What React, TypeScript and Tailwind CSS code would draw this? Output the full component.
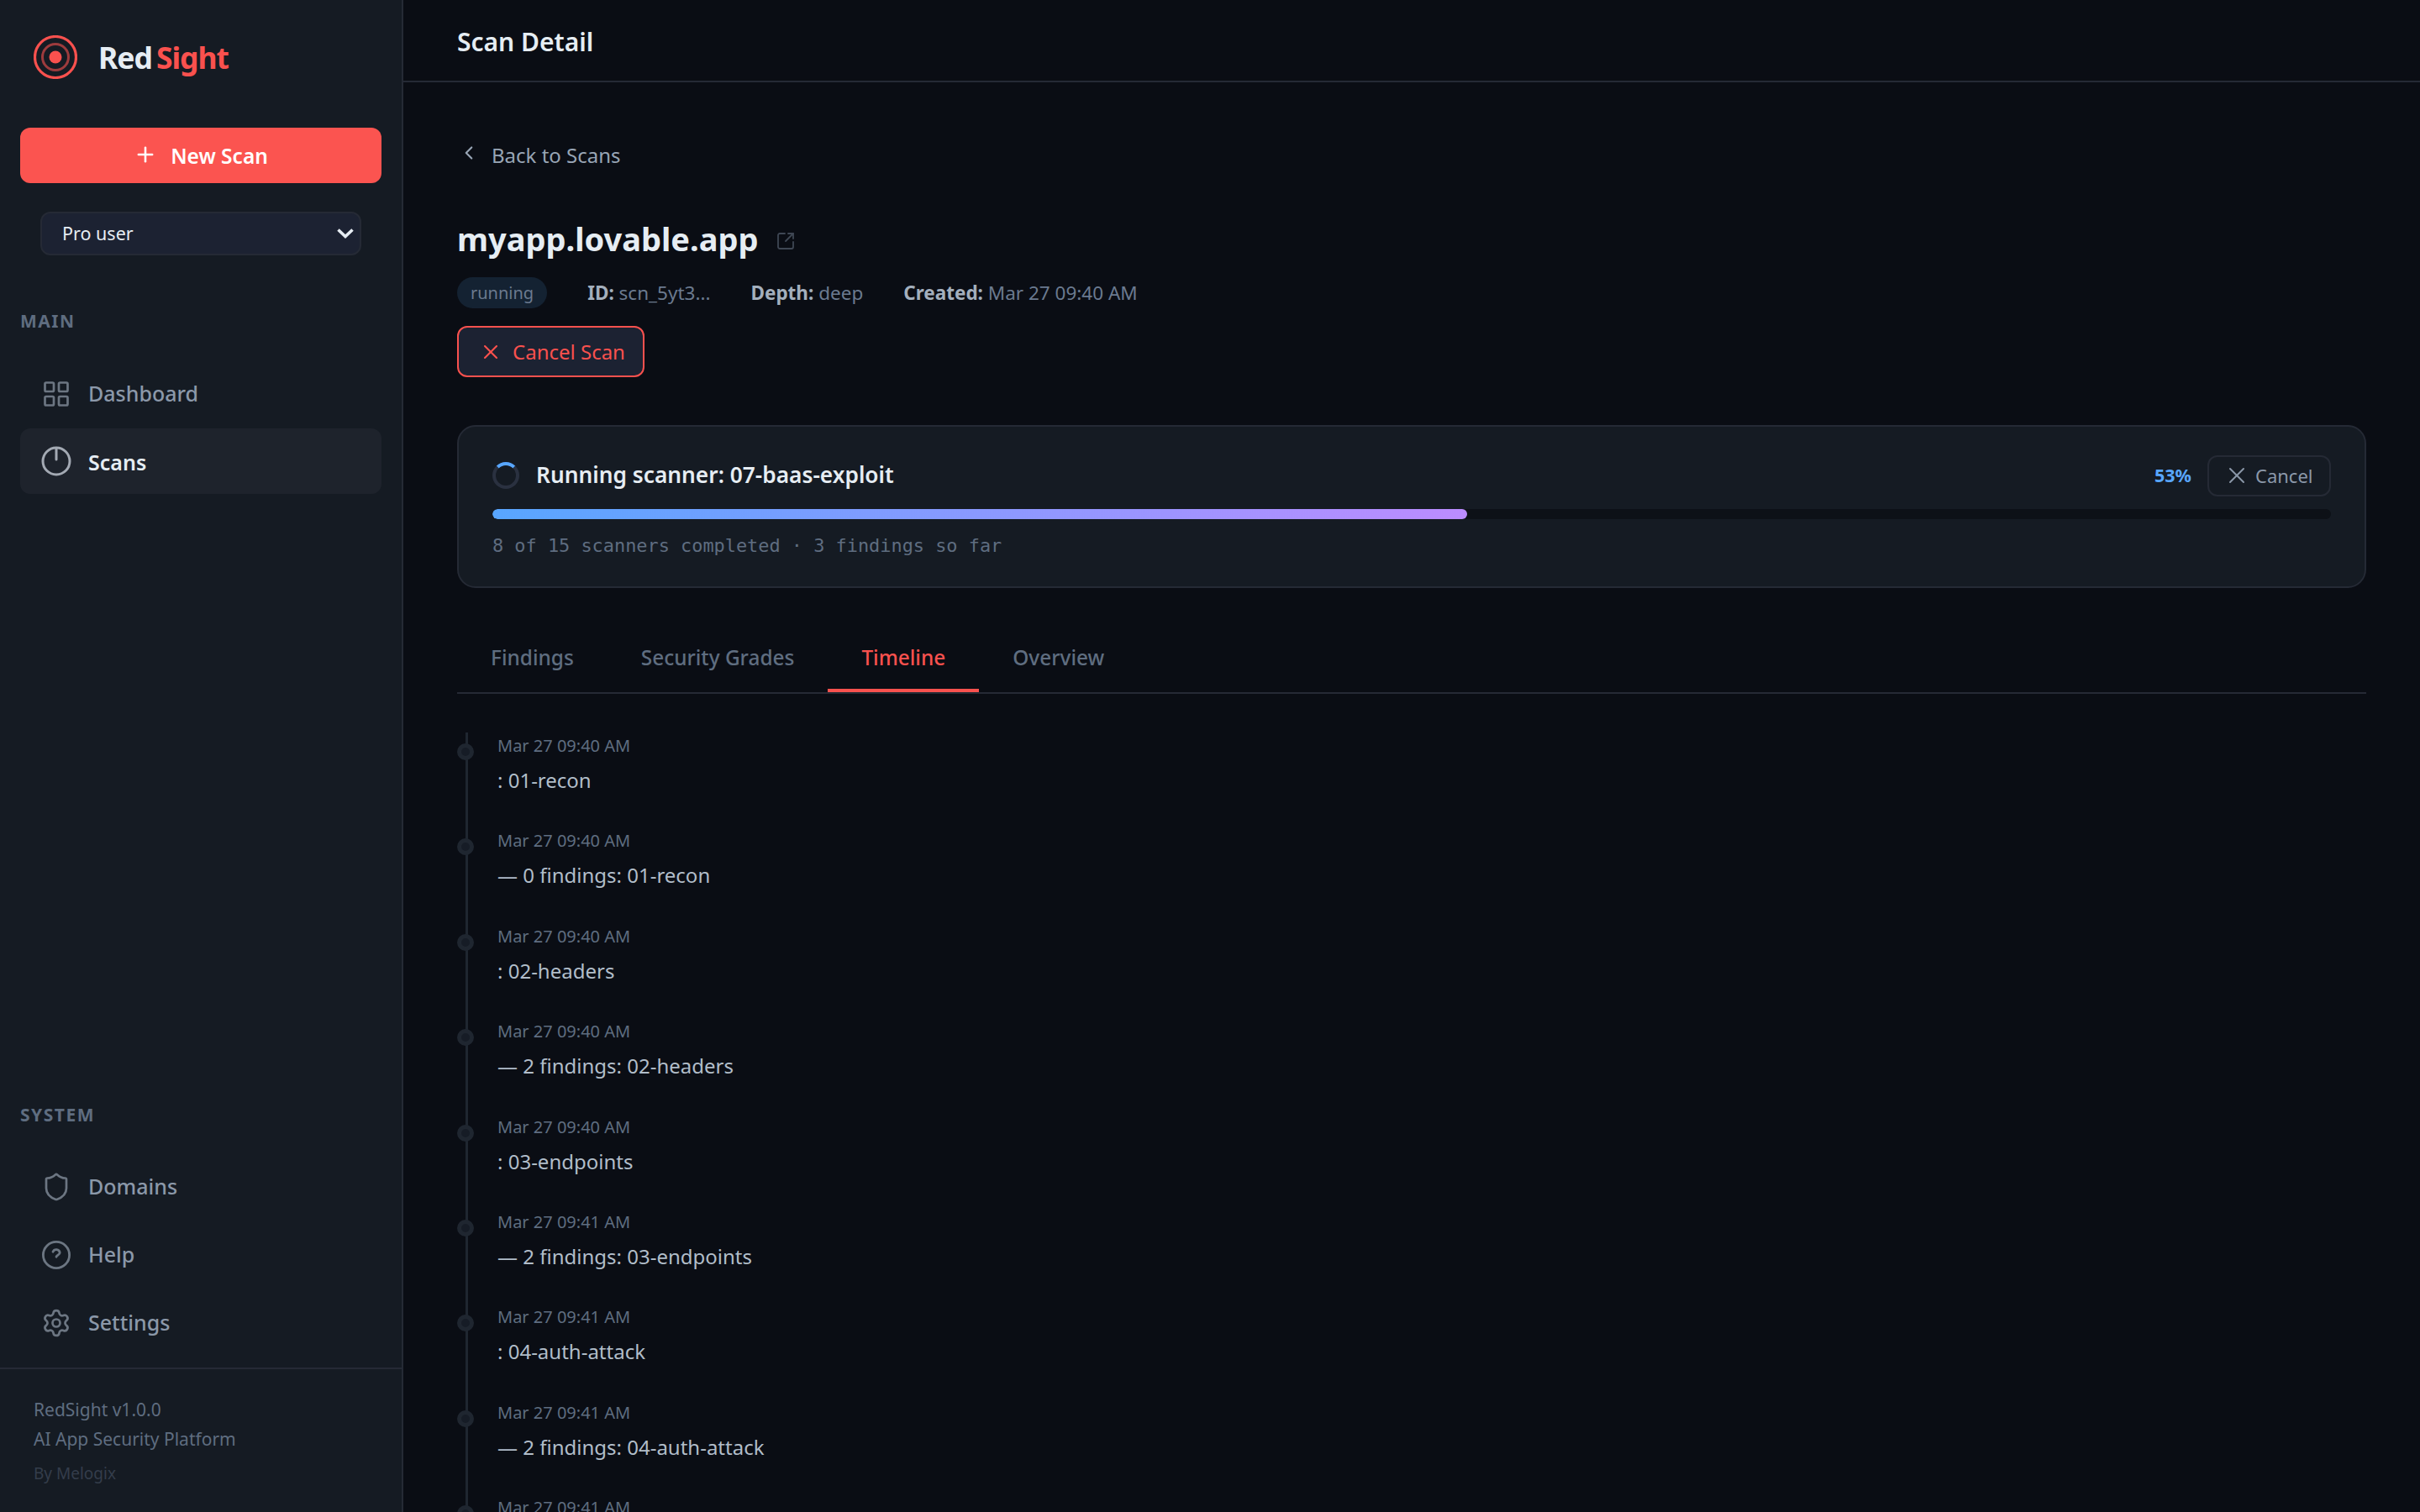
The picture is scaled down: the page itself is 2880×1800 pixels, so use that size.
import { ChevronLeft, LayoutGrid, Plus, Settings, Shield, SquareArrowOutUpRight, X } from "lucide-react";

const FONT = "font-['Noto_Sans','Open_Sans',sans-serif]";

function Logo() {
  return (
    <svg width="52" height="52" viewBox="0 0 52 52" fill="none" className="shrink-0">
      <circle cx="26" cy="26" r="24.5" stroke="#f9514e" strokeWidth="3.2" />
      <circle cx="26" cy="26" r="15.5" stroke="#f9514e" strokeOpacity="0.6" strokeWidth="3" />
      <circle cx="26" cy="26" r="7.5" fill="#f9514e" />
    </svg>
  );
}

function ScanIcon() {
  return (
    <svg width="36" height="36" viewBox="0 0 36 36" fill="none" stroke="currentColor" strokeWidth="3" strokeLinecap="round">
      <circle cx="18" cy="18" r="16" />
      <path d="M18 3v13" />
    </svg>
  );
}

function HelpIcon() {
  return (
    <svg width="36" height="36" viewBox="0 0 36 36" fill="none" stroke="currentColor" strokeWidth="2.8" strokeLinecap="round">
      <circle cx="18" cy="18" r="15.6" />
      <path d="M14 14.2a4.3 4.3 0 0 1 8.2 1c0 2.6-3.4 3-4.2 5" />
    </svg>
  );
}

function NavItem({ icon, label, active }: { icon: React.ReactNode; label: string; active?: boolean }) {
  return (
    <div
      className={`flex h-[78px] items-center gap-[20px] rounded-[12px] pl-[25px] text-[25px] ${
        active ? "bg-[#1e232c] font-semibold text-[#e6edf3]" : "font-medium text-[#8b98a9]"
      }`}
    >
      <span className={`flex w-[36px] justify-center ${active ? "text-[#a3a9b3]" : "text-[#6c7682]"}`}>{icon}</span>
      <span className={active ? "pt-[3px]" : ""}>{label}</span>
    </div>
  );
}

const events: [string, string][] = [
  ["Mar 27 09:40 AM", ": 01-recon"],
  ["Mar 27 09:40 AM", "— 0 findings: 01-recon"],
  ["Mar 27 09:40 AM", ": 02-headers"],
  ["Mar 27 09:40 AM", "— 2 findings: 02-headers"],
  ["Mar 27 09:40 AM", ": 03-endpoints"],
  ["Mar 27 09:41 AM", "— 2 findings: 03-endpoints"],
  ["Mar 27 09:41 AM", ": 04-auth-attack"],
  ["Mar 27 09:41 AM", "— 2 findings: 04-auth-attack"],
  ["Mar 27 09:41 AM", ""],
];

export default function App() {
  return (
    <div className={`flex h-[1800px] w-[2880px] overflow-hidden bg-[#0a0d14] ${FONT}`}>
      <aside className="flex w-[480px] shrink-0 flex-col border-r-2 border-[#252a35] bg-[#151b23]">
        <div className="flex items-center gap-[25px] pl-[40px] pt-[42px]">
          <Logo />
          <div className="text-[35.5px] font-bold leading-[52px] tracking-[-1px]">
            <span className="text-[#e6edf3]">Red</span>
            <span className="ml-[5px] text-[#f9514e]">Sight</span>
          </div>
        </div>
        <div className="mx-[24px] mt-[58px] flex h-[66px] items-center justify-center gap-[16px] rounded-[12px] bg-[#fb5450] text-[24.5px] font-semibold text-white">
          <Plus size={28} strokeWidth={2.2} className="-mt-[3px]" />
          <span className="pt-[2px]">New Scan</span>
        </div>
        <div className="relative mx-[48px] mt-[34px] h-[52px]">
          <select className="h-full w-full appearance-none rounded-[12px] border-2 border-[#252a35] bg-[#1c2232] pl-[24px] text-[21.5px] text-[#e6edf3] outline-none">
            <option>Pro user</option>
          </select>
          <svg width="22" height="14" viewBox="0 0 22 14" fill="none" className="pointer-events-none absolute right-[8px] top-[19px]">
            <path d="M2.5 2.5 11 10.5l8.5-8" stroke="#e6edf3" strokeWidth="3.6" />
          </svg>
        </div>
        <div className="ml-[24px] mt-[63px] text-[21px] font-bold leading-[30px] tracking-[1.5px] text-[#5f6d80]">MAIN</div>
        <div className="mx-[24px] mt-[33px] flex flex-col gap-[2px]">
          <NavItem icon={<LayoutGrid size={36} strokeWidth={1.8} />} label="Dashboard" />
          <NavItem icon={<ScanIcon />} label="Scans" active />
        </div>
        <div className="mt-auto">
          <div className="ml-[24px] text-[21px] font-bold leading-[30px] tracking-[1.5px] text-[#5f6d80]">SYSTEM</div>
          <div className="mx-[24px] mt-[32px] flex flex-col gap-[3px]">
            <NavItem icon={<Shield size={36} strokeWidth={1.8} />} label="Domains" />
            <NavItem icon={<HelpIcon />} label="Help" />
            <NavItem icon={<Settings size={36} strokeWidth={1.8} />} label="Settings" />
          </div>
          <div className="mt-[14px] h-[172px] border-t-2 border-[#252a35] pl-[40px] pt-[31px] text-[21px] leading-[35px] text-[#5f6d80]">
            <div>RedSight v1.0.0</div>
            <div>AI App Security Platform</div>
            <div className="mt-[6px] text-[19px] text-[#343d4b]">By Melogix</div>
          </div>
        </div>
      </aside>

      <main className="flex min-w-0 flex-1 flex-col">
        <header className="flex h-[98px] shrink-0 items-center border-b-2 border-[#252a35] pl-[64px] pt-[2px] text-[30px] font-semibold text-[#e6edf3]">
          Scan Detail
        </header>
        <div className="flex-1 overflow-hidden pl-[64px] pr-[64px]">
          <div className="mt-[68px] flex h-[38px] items-center gap-[14px] text-[24px] text-[#98a5b5]">
            <ChevronLeft size={26} strokeWidth={2} className="-mt-[6px] ml-[1px]" />
            <span>Back to Scans</span>
          </div>
          <div className="mt-[50px] flex h-[60px] items-center gap-[20px]">
            <h1 className="text-[38px] font-bold text-[#e6edf3]">myapp.lovable.app</h1>
            <SquareArrowOutUpRight size={24} strokeWidth={1.8} className="mt-[6px] text-[#3f4754]" />
          </div>
          <div className="mt-[16px] flex h-[37px] items-center gap-[48px] text-[22.5px] text-[#6b7a8f]">
            <span className="flex h-[37px] items-center rounded-full bg-[#142232] px-[16px] text-[20px] text-[#6b7a8f]">running</span>
            <span><b className="font-bold text-[#a3afbd]">ID:</b> scn_5yt3...</span>
            <span><b className="font-bold text-[#a3afbd]">Depth:</b> deep</span>
            <span><b className="font-bold text-[#a3afbd]">Created:</b> Mar 27 09:40 AM</span>
          </div>
          <div className="mt-[21px] flex h-[61px] w-[223px] items-center gap-[12px] rounded-[12px] border-2 border-[#f9514e] bg-[#1c2232] pl-[24px] text-[24px] text-[#f9514e]">
            <X size={28} strokeWidth={1.8} />
            <span>Cancel Scan</span>
          </div>

          <section className="mt-[57px] h-[194px] rounded-[22px] border-2 border-[#252a35] bg-[#151b23] px-[40px] pt-[32px]">
            <div className="flex h-[52px] items-center">
              <div className="h-[32px] w-[32px] rounded-full border-[4px] border-[#2a3140] border-t-[#58a6ff]" />
              <div className="ml-[20px] text-[26.3px] font-semibold text-[#e6edf3]">Running scanner: 07-baas-exploit</div>
              <div className="ml-auto text-[21.5px] font-bold text-[#58a6ff]">53%</div>
              <div className="ml-[19px] flex h-[49px] w-[147px] items-center gap-[6px] rounded-[12px] border-2 border-[#252a35] pl-[17px] text-[22px] text-[#8b98a9]">
                <X size={32} strokeWidth={1.5} />
                <span>Cancel</span>
              </div>
            </div>
            <div className="mt-[14px] h-[12px] overflow-hidden rounded-full bg-[#0d1117]">
              <div className="h-full rounded-full bg-[linear-gradient(90deg,#58a6ff,#bc8cff)]" style={{ width: "53%" }} />
            </div>
            <div className="mt-[17px] font-['DejaVu_Sans_Mono',monospace] text-[21.9px] leading-[30px] text-[#5f6d80]">
              8 of 15 scanners completed · 3 findings so far
            </div>
          </section>

          <nav className="mt-[56px] flex h-[70px] border-b-2 border-[#252a35] text-[24.4px] font-medium text-[#5f6d80]">
            <div className="px-[40px] pt-[9px]">Findings</div>
            <div className="px-[40px] pt-[9px]">Security Grades</div>
            <div className="h-[68px] border-b-[4px] border-[#f9514e] px-[40px] pt-[9px] text-[#f9514e]">Timeline</div>
            <div className="px-[40px] pt-[9px]">Overview</div>
          </nav>

          <div className="relative mt-[46px]">
            <div className="absolute bottom-0 left-[10px] top-0 w-[3px] bg-[#1f2630]" />
            {events.map(([date, text], i) => (
              <div key={i} className="relative h-[113.4px] pl-[48px] pt-[1px]">
                <div className="absolute left-0 top-[13px] h-[20px] w-[20px] rounded-full border-[5px] border-[#1f2630] bg-[#161c26]" />
                <div className="text-[20px] leading-[30px] text-[#5f6d80]">{date}</div>
                {text && <div className="mt-[9px] text-[24px] leading-[34px] text-[#b1bdc9]">{text}</div>}
              </div>
            ))}
          </div>
        </div>
      </main>
    </div>
  );
}
